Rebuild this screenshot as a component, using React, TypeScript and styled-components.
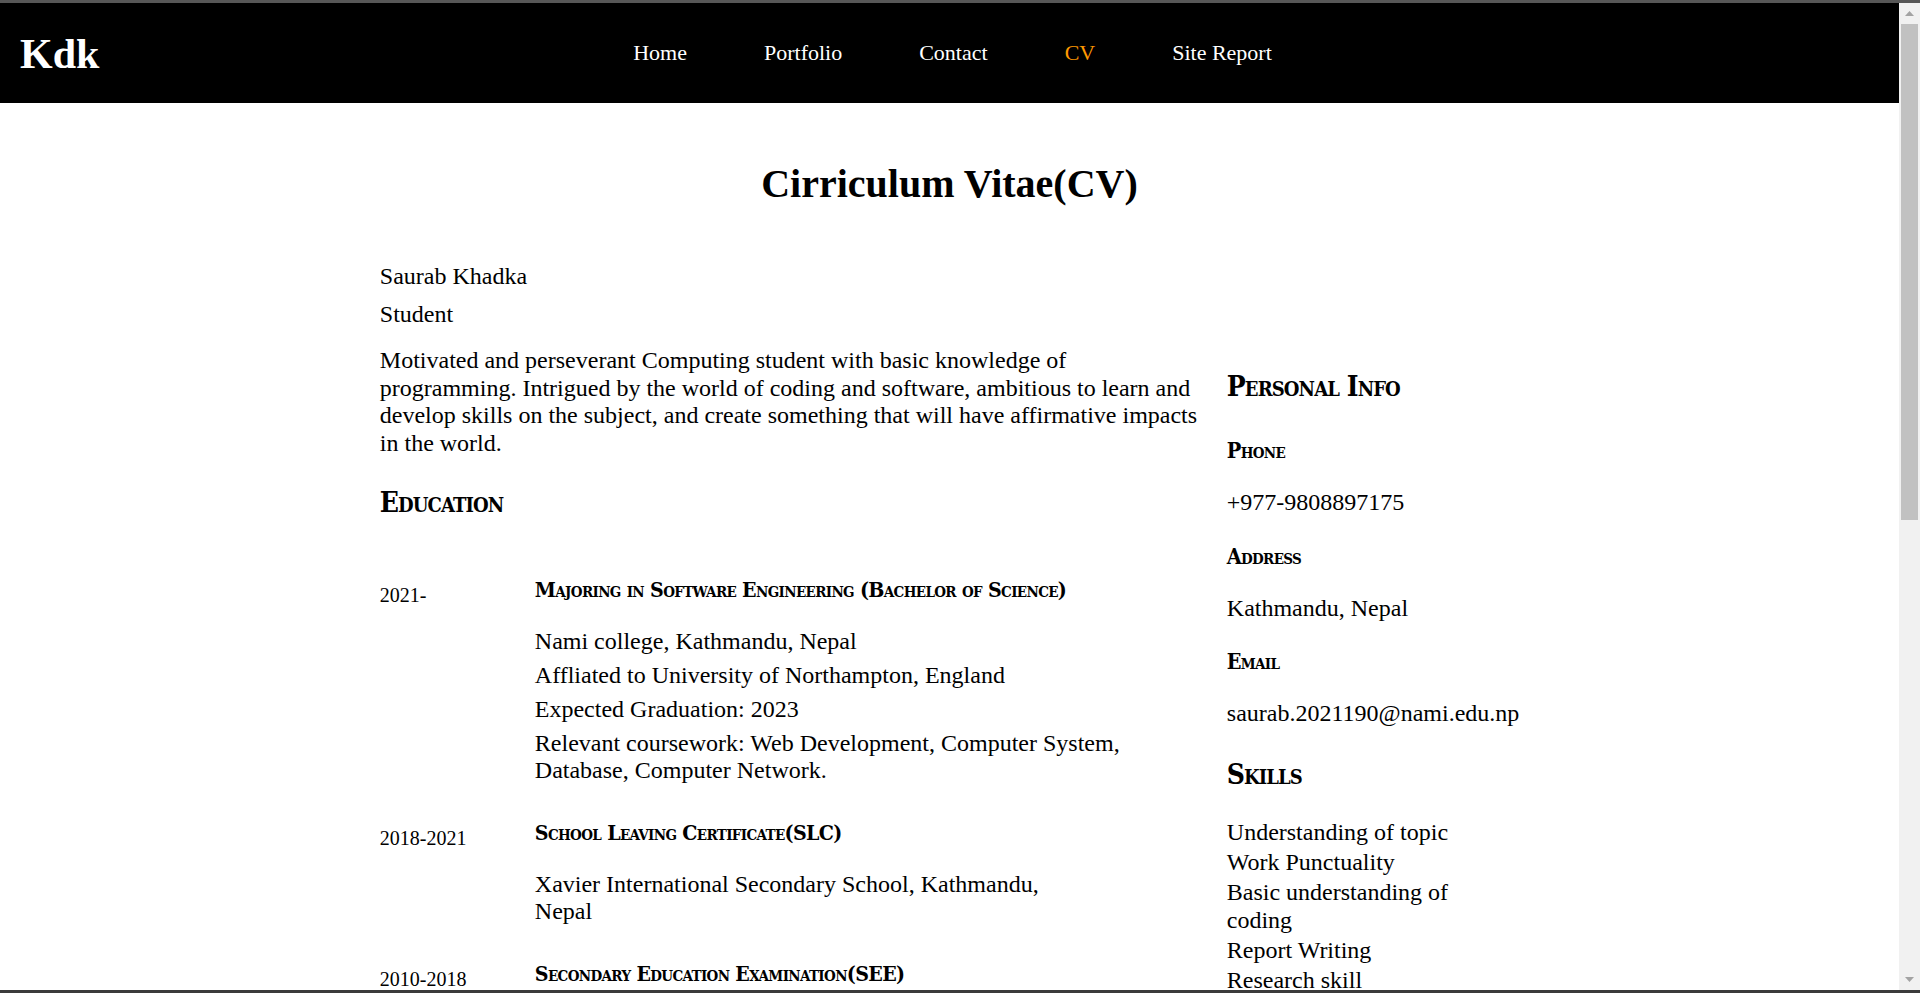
import React from "react";
import styled, { createGlobalStyle } from "styled-components";

const GlobalStyle = createGlobalStyle`
  html, body {
    margin: 0;
    padding: 0;
    height: 100%;
    overflow: hidden;
  }
  body {
    font-family: "Liberation Serif", "Times New Roman", serif;
    color: #000;
    background: #fff;
  }
  * { box-sizing: border-box; }
`;

const Frame = styled.div`
  height: 100vh;
  display: flex;
  flex-direction: column;
  border-top: 3px solid #575757;
  border-bottom: 3px solid #3b3b3b;
`;

const Viewport = styled.div`
  flex: 1;
  min-height: 0;
  display: flex;
`;

const Page = styled.div`
  flex: 1;
  min-width: 0;
  overflow: hidden;
  background: #fff;
`;

const ScrollRail = styled.div`
  width: 21px;
  flex: none;
  background: #f1f1f1;
  display: flex;
  flex-direction: column;
`;

const RailButton = styled.div`
  height: 21px;
  flex: none;
  display: flex;
  align-items: center;
  justify-content: center;
`;

const RailThumb = styled.div`
  height: 496px;
  margin: 0 2px;
  background: #c1c1c1;
`;

const RailSpacer = styled.div`
  flex: 1;
`;

const NavBar = styled.header`
  height: 100px;
  background: #000;
  display: grid;
  grid-template-columns: 1fr auto 1fr;
  align-items: center;
  padding: 0 20px;
`;

const Logo = styled.div`
  color: #fff;
  font-size: 42px;
  font-weight: bold;
  line-height: 1;
  padding-top: 2px;
`;

const NavList = styled.nav`
  display: flex;
  gap: 77px;
  padding-left: 6px;
`;

const NavLink = styled.a<{ $active?: boolean }>`
  color: ${(p) => (p.$active ? "#ff9900" : "#fff")};
  text-decoration: none;
  font-size: 22px;
  line-height: 1.15;
`;

const Main = styled.main`
  width: 60%;
  margin: 0 auto;
`;

const PageTitle = styled.h1`
  margin: 58px 0 0;
  font-size: 40px;
  line-height: 46px;
  font-weight: bold;
  text-align: center;
`;

const Line = styled.p<{ $gap?: number }>`
  margin: ${(p) => p.$gap ?? 0}px 0 0;
  font-size: 24px;
  line-height: 27.6px;
`;

const Columns = styled.div`
  display: grid;
  grid-template-columns: 826px 285px;
  column-gap: 21px;
  margin-top: 19px;
  align-items: start;
`;

const Column = styled.section``;

const headingFont = `
  font-family: "DejaVu Serif Condensed", "DejaVu Serif", serif;
  font-stretch: condensed;
  font-weight: bold;
  font-variant: small-caps;
`;

const SectionHeading = styled.h2<{ $gap: number }>`
  ${headingFont}
  margin: ${(p) => p.$gap}px 0 0;
  font-size: 28px;
  letter-spacing: -0.9px;
  line-height: 38px;
`;

const InfoLabel = styled.h3<{ $gap?: number }>`
  ${headingFont}
  margin: ${(p) => p.$gap ?? 25}px 0 0;
  font-size: 21.5px;
  letter-spacing: -0.7px;
  line-height: 30px;
`;

const InfoValue = styled.p`
  margin: 23px 0 0;
  font-size: 24px;
  line-height: 27.6px;
`;

const EntryList = styled.div`
  margin-top: 54px;
`;

const Entry = styled.article`
  display: grid;
  grid-template-columns: 155px 1fr;
  margin-bottom: 34px;
`;

const EntryDate = styled.div`
  font-size: 20px;
  line-height: 23px;
  padding-top: 8px;
`;

const EntryTitle = styled.h3`
  ${headingFont}
  margin: 0;
  font-size: 21.2px;
  letter-spacing: -0.65px;
  line-height: 27px;
`;

const DetailList = styled.ul`
  list-style: none;
  margin: 25px 0 0;
  padding: 0;
`;

const Detail = styled.li`
  font-size: 24px;
  line-height: 27.6px;
  & + & {
    margin-top: 6.4px;
  }
`;

const SkillList = styled.ul`
  list-style: none;
  margin: 25px 0 0;
  padding: 0;
`;

const Skill = styled.li`
  font-size: 24px;
  line-height: 27.6px;
  & + & {
    margin-top: 2.4px;
  }
`;

const Arrow = ({ down }: { down?: boolean }) => (
  <svg width="9" height="5" viewBox="0 0 9 5" aria-hidden="true">
    <polygon points={down ? "0,0 9,0 4.5,5" : "0,5 9,5 4.5,0"} fill="#a3a3a3" />
  </svg>
);

const navItems = ["Home", "Portfolio", "Contact", "CV", "Site Report"];

const education = [
  {
    date: "2021-",
    title: "Majoring in Software Engineering (Bachelor of Science)",
    details: [
      "Nami college, Kathmandu, Nepal",
      "Affliated to University of Northampton, England",
      "Expected Graduation: 2023",
      "Relevant coursework: Web Development, Computer System, Database, Computer Network.",
    ],
  },
  {
    date: "2018-2021",
    title: "School Leaving Certificate(SLC)",
    details: ["Xavier International Secondary School, Kathmandu,\nNepal"],
  },
  {
    date: "2010-2018",
    title: "Secondary Education Examination(SEE)",
    details: [],
  },
];

const skills = [
  "Understanding of topic",
  "Work Punctuality",
  "Basic understanding of coding",
  "Report Writing",
  "Research skill",
];

export default function App() {
  return (
    <>
      <GlobalStyle />
      <Frame>
        <Viewport>
          <Page>
            <NavBar>
              <Logo>Kdk</Logo>
              <NavList>
                {navItems.map((item) => (
                  <NavLink key={item} href="#" $active={item === "CV"}>
                    {item}
                  </NavLink>
                ))}
              </NavList>
              <div />
            </NavBar>
            <Main>
              <PageTitle>Cirriculum Vitae(CV)</PageTitle>
              <Line $gap={56}>Saurab Khadka</Line>
              <Line $gap={10}>Student</Line>
              <Columns>
                <Column>
                  <Line>
                    Motivated and perseverant Computing student with basic knowledge of
                    programming. Intrigued by the world of coding and software, ambitious to learn
                    and develop skills on the subject, and create something that will have
                    affirmative impacts in the world.
                  </Line>
                  <SectionHeading $gap={26}>Education</SectionHeading>
                  <EntryList>
                    {education.map((e) => (
                      <Entry key={e.date}>
                        <EntryDate>{e.date}</EntryDate>
                        <div>
                          <EntryTitle>{e.title}</EntryTitle>
                          {e.details.length > 0 && (
                            <DetailList>
                              {e.details.map((d) => (
                                <Detail key={d}>
                                  {d.split("\n").map((part, i) => (
                                    <React.Fragment key={i}>
                                      {i > 0 && <br />}
                                      {part}
                                    </React.Fragment>
                                  ))}
                                </Detail>
                              ))}
                            </DetailList>
                          )}
                        </div>
                      </Entry>
                    ))}
                  </EntryList>
                </Column>
                <Column>
                  <SectionHeading $gap={21}>Personal Info</SectionHeading>
                  <InfoLabel $gap={30}>Phone</InfoLabel>
                  <InfoValue>+977-9808897175</InfoValue>
                  <InfoLabel>Address</InfoLabel>
                  <InfoValue>Kathmandu, Nepal</InfoValue>
                  <InfoLabel>Email</InfoLabel>
                  <InfoValue>saurab.2021190@nami.edu.np</InfoValue>
                  <SectionHeading $gap={28}>Skills</SectionHeading>
                  <SkillList>
                    {skills.map((s) => (
                      <Skill key={s}>{s}</Skill>
                    ))}
                  </SkillList>
                </Column>
              </Columns>
            </Main>
          </Page>
          <ScrollRail>
            <RailButton>
              <Arrow />
            </RailButton>
            <RailThumb />
            <RailSpacer />
            <RailButton>
              <Arrow down />
            </RailButton>
          </ScrollRail>
        </Viewport>
      </Frame>
    </>
  );
}
